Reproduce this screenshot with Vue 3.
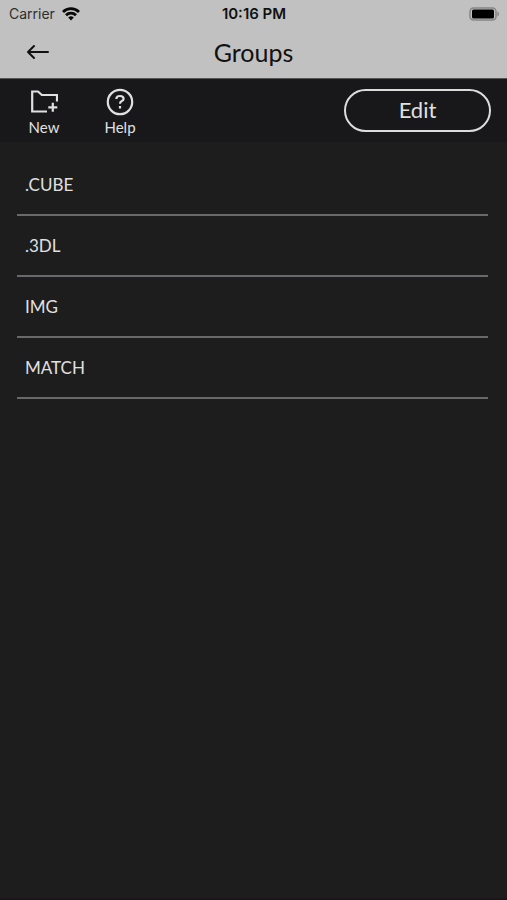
<script setup>
const groups = ['.CUBE', '.3DL', 'IMG', 'MATCH']
</script>

<template>
  <div class="screen">
    <header class="top">
      <div class="status">
        <div class="carrier">
          <span>Carrier</span>
          <svg class="wifi" viewBox="0 0 18 14" aria-hidden="true">
            <path d="M1 5a11.400 11.400 0 0 1 16 0" />
            <path d="M4 8.200a7.100 7.100 0 0 1 10 0" />
            <path class="dot" d="M9 13.400 6.200 10.600a4 4 0 0 1 5.600 0z" />
          </svg>
        </div>
        <span class="time">10:16 PM</span>
        <svg class="battery" viewBox="0 0 30 14" aria-hidden="true">
          <rect class="shell" x="1" y="1" width="26" height="12" rx="3.5" />
          <rect x="3" y="2.5" width="22" height="9" rx="1.5" />
          <path class="cap" d="M28.4 4.5q1.6.8 1.6 2.5t-1.6 2.5z" />
        </svg>
      </div>
      <nav class="nav">
        <button class="back" type="button" aria-label="Back">
          <svg viewBox="0 0 24 16" aria-hidden="true">
            <path d="M22 8H2M8 2 2 8l6 6" />
          </svg>
        </button>
        <h1>Groups</h1>
      </nav>
    </header>

    <div class="toolbar">
      <button class="tool" type="button">
        <svg viewBox="0 0 28 28" aria-hidden="true">
          <path d="M17 23.500H2.200V3.500h5.800l3.800 3.500H27V13.500M22.800 14.800v9M18.300 19.300h9" />
        </svg>
        <span>New</span>
      </button>
      <button class="tool" type="button">
        <svg viewBox="0 0 28 28" aria-hidden="true">
          <circle cx="14" cy="14" r="12.2" />
          <path d="M10.400 11v-.6q.3-2.400 3.600-2.400 3.600 0 3.600 2.700 0 1.500-1.800 2.300-1.800.8-1.800 2.800M14 18v2.400" />
        </svg>
        <span>Help</span>
      </button>
      <button class="edit" type="button">Edit</button>
    </div>

    <ul class="groups">
      <li v-for="group in groups" :key="group">
        <a href="#">{{ group }}</a>
      </li>
    </ul>
  </div>
</template>

<style>
body {
  margin: 0;
  background: #1d1d1e;
}
</style>

<style scoped>
.screen {
  box-sizing: border-box;
  min-height: 100vh;
  background: #1d1d1e;
  border-bottom: 2px solid #1a1518;
  color: #e0e0e0;
  font-family: Lato, "Open Sans", sans-serif;
}

button {
  margin: 0;
  padding: 0;
  border: 0;
  background: none;
  color: inherit;
  font-family: inherit;
  cursor: pointer;
}

svg {
  display: block;
  fill: none;
  stroke: currentColor;
}

.top {
  background: #c1c1c1;
  color: #111;
  border-bottom: 1px solid #565656;
}

.status {
  display: grid;
  grid-template-columns: 1fr auto 1fr;
  align-items: center;
  height: 28px;
  padding: 0 8px 0 9px;
  font: 14px/28px Inter, sans-serif;
}

.carrier {
  display: flex;
  align-items: center;
  gap: 7px;
  color: #2e2e2e;
}

.wifi {
  width: 18px;
  height: 14px;
  color: #080808;
  stroke-width: 2.8;
}

.dot {
  fill: currentColor;
  stroke: none;
}

.time {
  font-size: 15px;
  font-weight: 600;
}

.battery {
  justify-self: end;
  width: 30px;
  height: 14px;
  fill: #000;
  stroke: none;
}

.battery .shell {
  fill: none;
  stroke: #858585;
  stroke-width: 1.5;
}

.battery .cap {
  fill: #858585;
}

.nav {
  display: grid;
  grid-template-columns: 1fr auto 1fr;
  align-items: center;
  height: 48px;
  padding: 0 26px 2px;
}

.back {
  justify-self: start;
}

.back svg {
  width: 24px;
  height: 16px;
  stroke-width: 2;
  stroke-linecap: round;
  stroke-linejoin: round;
}

h1 {
  margin: 0;
  font-size: 25px;
  line-height: 48px;
  font-weight: 400;
}

.toolbar {
  display: flex;
  align-items: center;
  gap: 44px;
  height: 63px;
  padding: 0 16px 0 28px;
  background: #18181a;
}

.tool {
  display: flex;
  flex-direction: column;
  align-items: center;
  gap: 1px;
  width: 32px;
  padding-top: 4px;
  font-size: 15px;
  line-height: 20px;
}

.tool svg {
  width: 28px;
  height: 28px;
  stroke-width: 2.2;
}

.edit {
  box-sizing: border-box;
  width: 147px;
  height: 43px;
  margin-left: auto;
  border: 2px solid #dcdcdc;
  border-radius: 22px;
  font-size: 22px;
  line-height: 36px;
  padding-bottom: 2px;
}

.groups {
  margin: 0;
  padding: 13px 19px 0 17px;
  list-style: none;
}

.groups li {
  border-bottom: 2px solid #69696b;
}

.groups a {
  display: block;
  padding: 0 8px;
  color: inherit;
  font-size: 17px;
  line-height: 59px;
  text-decoration: none;
}
</style>
